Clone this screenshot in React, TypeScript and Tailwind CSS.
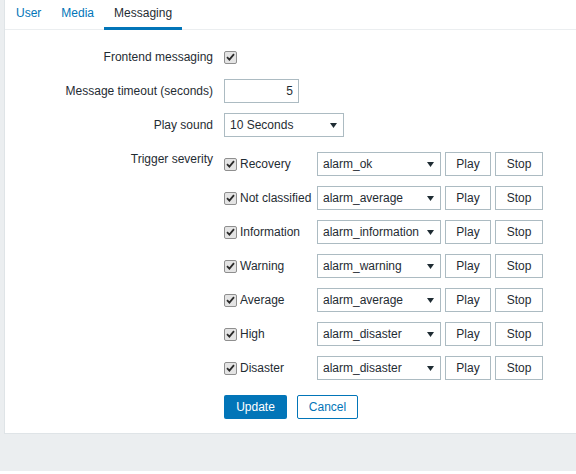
import React from "react";

const FONT = { fontFamily: '"Liberation Sans", Arial, sans-serif' };

function Check() {
  return (
    <span className="inline-flex h-[13px] w-[13px] shrink-0 items-center justify-center rounded-[2px] border border-[#8f8f8f] bg-[#e4e4e4]">
      <svg width="9" height="8" viewBox="0 0 9 8">
        <path d="M1 4.2 L3.4 6.6 L8 1.2" fill="none" stroke="#2b2b2b" strokeWidth="1.8" />
      </svg>
    </span>
  );
}

function Select({ value, width }: { value: string; width: string }) {
  return (
    <div className={`flex h-[24px] ${width} shrink-0 items-center justify-between border border-[#acbbc2] bg-white pl-[5px] pr-[6px] text-[#1f2c33]`}>
      <span>{value}</span>
      <svg width="7" height="5" viewBox="0 0 7 5">
        <polygon points="0,0 7,0 3.5,5" fill="#1f2c33" />
      </svg>
    </div>
  );
}

function Btn({ label, width }: { label: string; width: string }) {
  return (
    <div className={`flex h-[24px] ${width} shrink-0 items-center justify-center border border-[#acbbc2] bg-white text-[#1f2c33]`}>
      {label}
    </div>
  );
}

const severities: [string, string][] = [
  ["Recovery", "alarm_ok"],
  ["Not classified", "alarm_average"],
  ["Information", "alarm_information"],
  ["Warning", "alarm_warning"],
  ["Average", "alarm_average"],
  ["High", "alarm_disaster"],
  ["Disaster", "alarm_disaster"],
];

export default function App() {
  return (
    <div className="flex h-[474px] w-[576px] flex-col bg-white text-[12px] leading-[14px] text-[#1f2c33]" style={FONT}>
      <div className="flex h-[434px] bg-[#ebeef0]">
        <div className="w-[4px] shrink-0" />
        <div className="flex flex-1 flex-col border-b border-l border-[#dfe4e7] bg-white">
          {/* tabs */}
          <div className="flex h-[30px] border-b border-[#ebeef0] pl-[1px]">
            <div className="px-[10px] pt-[6px] text-[#0275b8]">User</div>
            <div className="px-[10px] pt-[6px] text-[#0275b8]">Media</div>
            <div className="relative px-[10px] pt-[6px] text-[#1f2c33]">
              Messaging
              <span className="absolute bottom-[-1px] left-0 right-0 h-[3px] bg-[#0275b8]" />
            </div>
          </div>

          {/* form */}
          <div className="flex flex-col pt-[15px]">
            <div className="flex h-[24px] items-center">
              <div className="w-[208px] text-right">Frontend messaging</div>
              <div className="ml-[11px] flex items-center">
                <Check />
              </div>
            </div>

            <div className="mt-[10px] flex h-[24px] items-center">
              <div className="w-[208px] text-right">Message timeout (seconds)</div>
              <div className="ml-[11px] flex h-[24px] w-[75px] items-center justify-end border border-[#acbbc2] pr-[5px]">
                5
              </div>
            </div>

            <div className="mt-[10px] flex h-[24px] items-center">
              <div className="w-[208px] text-right">Play sound</div>
              <div className="ml-[11px]">
                <Select value="10 Seconds" width="w-[120px]" />
              </div>
            </div>

            <div className="mt-[15px] flex items-start">
              <div className="w-[208px] text-right">Trigger severity</div>
              <div className="ml-[11px] flex flex-col gap-[10px]">
                {severities.map(([name, sound]) => (
                  <div key={name} className="flex h-[24px] items-center">
                    <div className="flex w-[93px] shrink-0 items-center gap-[3px]">
                      <Check />
                      <span className="whitespace-nowrap">{name}</span>
                    </div>
                    <Select value={sound} width="w-[124px]" />
                    <div className="ml-[4px]">
                      <Btn label="Play" width="w-[46px]" />
                    </div>
                    <div className="ml-[4px]">
                      <Btn label="Stop" width="w-[48px]" />
                    </div>
                  </div>
                ))}
              </div>
            </div>

            <div className="mt-[15px] flex">
              <div className="w-[208px]" />
              <div className="ml-[11px] flex gap-[10px]">
                <div className="flex h-[24px] w-[63px] items-center justify-center rounded-[2px] bg-[#0275b8] text-white">
                  Update
                </div>
                <div className="flex h-[24px] w-[61px] items-center justify-center rounded-[2px] border border-[#0275b8] bg-white text-[#0275b8]">
                  Cancel
                </div>
              </div>
            </div>
          </div>
        </div>
      </div>
      <div className="h-[37px] bg-[#ebeef0]" />
    </div>
  );
}
